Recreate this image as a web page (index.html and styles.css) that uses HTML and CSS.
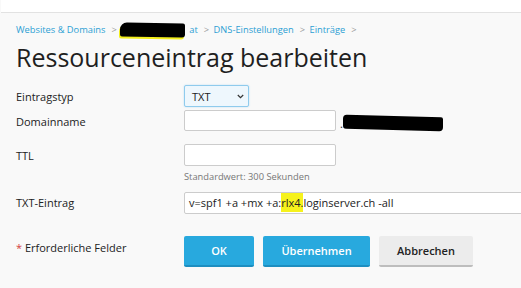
FILE: index.html
```html
<!DOCTYPE html>
<html lang="de">
<head>
<meta charset="utf-8">
<link rel="stylesheet" href="styles.css">
</head>
<body>
<div class="topbar"></div>
<main class="page">
  <nav class="crumbs">
    <a href="#">Websites &amp; Domains</a><span class="sep">&gt;</span><span class="redact-crumb"></span><a href="#">at</a><span class="sep">&gt;</span><a href="#">DNS-Einstellungen</a><span class="sep">&gt;</span><a href="#">Einträge</a><span class="sep">&gt;</span>
  </nav>
  <h1 class="title">Ressourceneintrag bearbeiten</h1>
  <form class="form">
    <div class="row row-type">
      <label class="label">Eintragstyp</label>
      <div class="field">
        <div class="select"><span>TXT</span>
          <svg class="chev" width="7" height="5" viewBox="0 0 7 5"><path d="M0.8 1 L3.5 3.7 L6.2 1" fill="none" stroke="#333" stroke-width="1.2"/></svg>
        </div>
      </div>
    </div>
    <div class="row row-domain">
      <label class="label">Domainname</label>
      <div class="field domain-field">
        <div class="input short dom"></div><span class="dot">.</span><span class="redact-domain"></span>
      </div>
    </div>
    <div class="row row-ttl">
      <label class="label">TTL</label>
      <div class="field col">
        <div class="input short"></div>
        <div class="hint">Standardwert: 300 Sekunden</div>
      </div>
    </div>
    <div class="row row-txt">
      <label class="label">TXT-Eintrag</label>
      <div class="field">
        <div class="input wide">v=spf1 +a +mx +a:<mark>rlx4.</mark>loginserver.ch -all</div>
      </div>
    </div>
    <div class="row row-actions">
      <div class="label"><span class="star">*</span> Erforderliche Felder</div>
      <div class="field buttons">
        <button type="button" class="btn primary ok">OK</button>
        <button type="button" class="btn primary apply">Übernehmen</button>
        <button type="button" class="btn cancel">Abbrechen</button>
      </div>
    </div>
  </form>
</main>
</body>
</html>
```
FILE: styles.css
```css
* { box-sizing: border-box; }
html, body { margin: 0; padding: 0; }
body {
  width: 521px;
  height: 288px;
  overflow: hidden;
  background: #f9f9f9;
  font-family: "Open Sans", "Noto Sans", sans-serif;
  color: #222;
}
.topbar {
  height: 13px;
  background: #fff;
  border-bottom: 1px solid #e2e2e2;
  margin-left: 1px;
}
.page {
  padding: 0 0 0 16px;
}
.crumbs {
  margin-top: 10px;
  height: 13px;
  font-size: 9.3px;
  line-height: 13px;
  display: flex;
  align-items: center;
  white-space: nowrap;
}
.crumbs a {
  color: #2c9fd4;
  text-decoration: none;
}
.crumbs .sep {
  color: #999;
  margin: 0 4.5px 0 6px;
}
.redact-crumb {
  display: inline-block;
  width: 65px;
  height: 14px;
  margin: 0 4px 0 -1px;
  background: #000;
  border-radius: 7px 2px 3px 2px;
  box-shadow: -1px 2px 0 #f2ee1c;
  transform: skewY(1deg);
}
.title {
  margin: 4px 0 0 0;
  font-size: 25px;
  font-weight: 400;
  line-height: 34px;
  color: #1f1f1f;
}
.form {
  margin-top: 11px;
}
.row {
  display: flex;
  align-items: flex-start;
}
.label {
  width: 168px;
  flex: none;
  font-size: 11px;
  line-height: 15px;
  padding-top: 4px;
  color: #222;
}
.field { display: flex; align-items: center; }
.field.col { flex-direction: column; align-items: flex-start; }
.row-domain { margin-top: 3px; }
.row-ttl { margin-top: 13px; }
.row-txt { margin-top: 9px; }
.row-txt .label { padding-top: 3px; }
.row-actions { margin-top: 22px; }

.select {
  width: 65px;
  height: 22px;
  border: 1px solid #8fcbed;
  background: #eef7fd;
  border-radius: 2px;
  box-shadow: 0 0 2px #b9def3;
  display: flex;
  align-items: center;
  justify-content: space-between;
  padding: 0 4px 0 7px;
  font-size: 11px;
}
.input {
  height: 22px;
  border: 1px solid #ccc;
  background: #fff;
  border-radius: 2px;
  font-size: 11px;
  line-height: 19px;
  padding: 0 4px;
  white-space: nowrap;
}
.input.short { width: 152px; }
.input.dom { height: 21px; }
.input.wide { width: 360px; height: 22px; }
.input mark {
  background: #f6f21c;
  color: #222;
  padding: 2px 0;
}
.dot { font-size: 11px; margin: 5px 0 0 4px; }
.redact-domain {
  display: inline-block;
  width: 100px;
  height: 14px;
  background: #000;
  margin: 5px 0 0 0;
  border-radius: 4px 2px 4px 3px;
  transform: skewY(1.5deg);
}
.hint {
  margin-top: 4px;
  font-size: 9.3px;
  line-height: 13px;
  color: #777;
}
.buttons { gap: 9px; }
.btn {
  height: 31px;
  border: none;
  border-radius: 2px;
  font-family: "Open Sans", "Noto Sans", sans-serif;
  font-size: 11px;
  font-weight: 600;
  padding: 0;
  cursor: pointer;
}
.btn.primary {
  background: #28a9de;
  color: #fff;
  border-bottom: 2px solid #1d8ec0;
}
.btn.ok { width: 70px; }
.btn.apply { width: 107px; }
.btn.cancel {
  width: 94px;
  background: #ececec;
  color: #222;
  border-bottom: 2px solid #bdbdbd;
}
.star { color: #d43f3f; }
```
